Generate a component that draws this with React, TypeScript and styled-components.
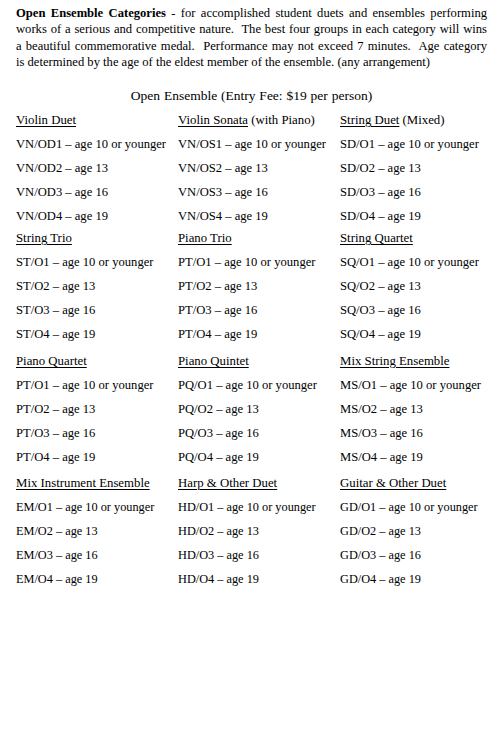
import React from 'react'
import styled, { createGlobalStyle } from 'styled-components'

const GlobalStyle = createGlobalStyle`
  html, body {
    margin: 0;
    padding: 0;
    background: #fff;
  }
  body {
    font-family: 'Liberation Serif', 'Times New Roman', serif;
    color: #000;
  }
`

const Page = styled.div`
  width: 503px;
  min-height: 739px;
  box-sizing: border-box;
  padding: 5px 16px 0 16px;
`

const Intro = styled.div`
  width: 471px;
  font-size: 12.6px;
  line-height: 16.4px;
`

// each printed line is kept as in the flyer, stretched to the full measure
const IntroLine = styled.span<{ $last?: boolean }>`
  display: block;
  white-space: nowrap;
  text-align: ${(p) => (p.$last ? 'left' : 'justify')};
  text-align-last: ${(p) => (p.$last ? 'left' : 'justify')};
  white-space: normal;
`

const Lead = styled.strong`
  font-weight: bold;
`

const Title = styled.h2`
  margin: 13px 0 0 0;
  font-size: 13.5px;
  font-weight: normal;
  line-height: 24px;
  text-align: center;
  word-spacing: 0.5px;
`

const Grid = styled.div`
  display: grid;
  grid-template-columns: 162px 162px 147px;
`

const Group = styled.div<{ $gapAfter: number }>`
  display: flex;
  flex-direction: column;
  margin-bottom: ${(p) => p.$gapAfter}px;
`

const Heading = styled.div`
  font-size: 12.8px;
  line-height: 24px;
  white-space: nowrap;
`

const Underlined = styled.span`
  text-decoration: underline;
  text-decoration-thickness: 1px;
  text-underline-offset: 2px;
`

const Row = styled.div<{ $tight?: boolean }>`
  font-size: ${(p) => (p.$tight ? 12.3 : 12.6)}px;
  line-height: 24px;
  white-space: nowrap;
`

type Category = {
  name: string
  note?: string
  code: string
  tight?: boolean
}

const rows: { gap: number; cats: Category[] }[] = [
  {
    gap: -2,
    cats: [
      { name: 'Violin Duet', code: 'VN/OD' },
      { name: 'Violin Sonata', note: ' (with Piano)', code: 'VN/OS' },
      { name: 'String Duet', note: ' (Mixed)', code: 'SD/O' },
    ],
  },
  {
    gap: 3,
    cats: [
      { name: 'String Trio', code: 'ST/O' },
      { name: 'Piano Trio', code: 'PT/O' },
      { name: 'String Quartet', code: 'SQ/O' },
    ],
  },
  {
    gap: 2,
    cats: [
      { name: 'Piano Quartet', code: 'PT/O' },
      { name: 'Piano Quintet', code: 'PQ/O' },
      { name: 'Mix String Ensemble', code: 'MS/O' },
    ],
  },
  {
    gap: 0,
    cats: [
      { name: 'Mix Instrument Ensemble', code: 'EM/O', tight: true },
      { name: 'Harp & Other Duet', code: 'HD/O', tight: true },
      { name: 'Guitar & Other Duet', code: 'GD/O', tight: true },
    ],
  },
]

const ages = ['age 10 or younger', 'age 13', 'age 16', 'age 19']

export default function App() {
  return (
    <>
      <GlobalStyle />
      <Page>
        <Intro>
          <IntroLine>
            <Lead>Open Ensemble Categories</Lead> - for accomplished student duets and ensembles
            performing
          </IntroLine>
          <IntroLine>
            works of a serious and competitive nature.&nbsp; The best four groups in each category
            will wins
          </IntroLine>
          <IntroLine>
            a beautiful commemorative medal.&nbsp; Performance may not exceed 7 minutes.&nbsp; Age
            category
          </IntroLine>
          <IntroLine $last>
            is determined by the age of the eldest member of the ensemble. (any arrangement)
          </IntroLine>
        </Intro>
        <Title>Open Ensemble (Entry Fee: $19 per person)</Title>
        <Grid>
          {rows.map((r) =>
            r.cats.map((c) => (
              <Group key={c.code + c.name} $gapAfter={r.gap}>
                <Heading>
                  <Underlined>{c.name}</Underlined>
                  {c.note}
                </Heading>
                {ages.map((a, i) => (
                  <Row key={a} $tight={c.tight}>
                    {c.code}
                    {i + 1} – {a}
                  </Row>
                ))}
              </Group>
            ))
          )}
        </Grid>
      </Page>
    </>
  )
}
